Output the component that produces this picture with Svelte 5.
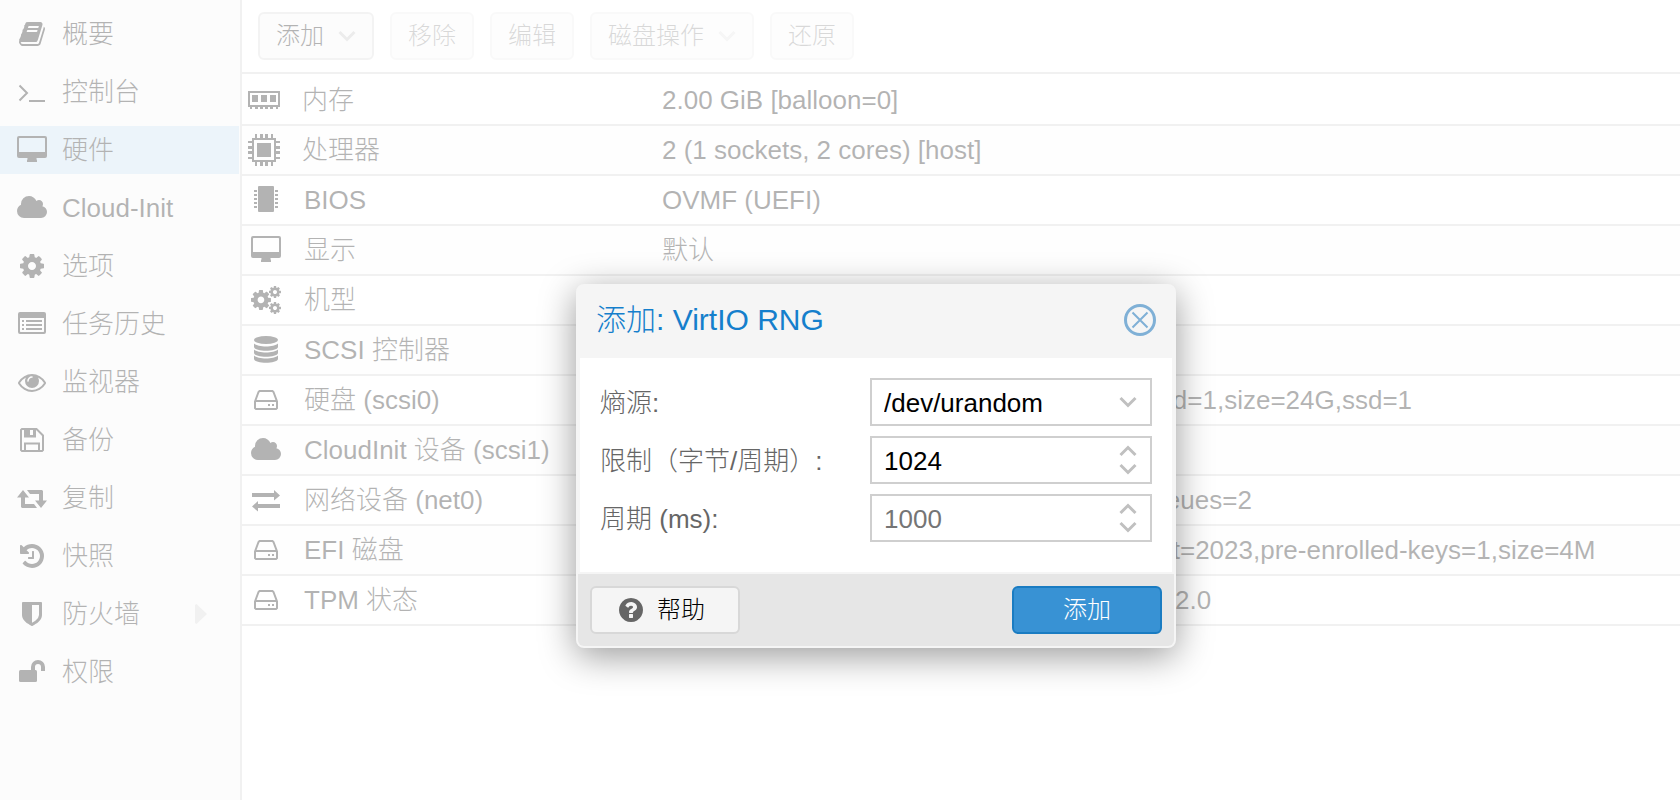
<script>
  const cog =
    "M1152 896q0-106-75-181t-181-75-181 75-75 181 75 181 181 75 181-75 75-181zm512-109v222q0 12-8 23t-20 13l-185 28q-19 54-39 91 35 50 107 138 10 12 10 25t-9 23q-27 37-99 108t-94 71q-12 0-26-9l-138-108q-44 23-91 38-16 136-29 186-7 28-36 28h-222q-14 0-24.5-8.5t-11.5-21.5l-28-184q-49-16-90-37l-141 107q-10 9-25 9-14 0-25-11-126-114-165-168-7-10-7-23 0-12 8-23 15-21 51-66.5t54-70.5q-27-50-41-99l-183-27q-13-2-21-12.5t-8-23.5v-222q0-12 8-23t19-13l186-28q14-46 39-92-40-57-107-138-10-12-10-24 0-10 9-23 26-36 98.5-107.5t94.5-71.5q13 0 26 10l138 107q44-23 91-38 16-136 29-186 7-28 36-28h222q14 0 24.5 8.5t11.5 21.5l28 184q49 16 90 37l142-107q9-9 24-9 13 0 25 10 129 119 165 170 7 8 7 22 0 12-8 23-15 21-51 66.5t-54 70.5q26 50 41 98l183 28q13 2 21 12.5t8 23.5z";

  const navItems = [
    { icon: "book", text: "概要" },
    { icon: "terminal", text: "控制台" },
    { icon: "desktop", text: "硬件", selected: true },
    { icon: "cloud", text: "Cloud-Init" },
    { icon: "cog", text: "选项" },
    { icon: "list", text: "任务历史" },
    { icon: "eye", text: "监视器" },
    { icon: "floppy", text: "备份" },
    { icon: "retweet", text: "复制" },
    { icon: "history", text: "快照" },
    { icon: "shield", text: "防火墙", expandable: true },
    { icon: "unlock", text: "权限" },
  ];

  const tools = [
    { text: "添加", menu: true },
    { text: "移除", disabled: true },
    { text: "编辑", disabled: true },
    { text: "磁盘操作", menu: true, disabled: true },
    { text: "还原", disabled: true },
  ];

  const hardware = [
    { icon: "memory", name: "内存", value: "2.00 GiB [balloon=0]" },
    { icon: "cpu", name: "处理器", value: "2 (1 sockets, 2 cores) [host]" },
    { icon: "chip", name: "BIOS", value: "OVMF (UEFI)" },
    { icon: "desktop", name: "显示", value: "默认" },
    { icon: "cogs", name: "机型", value: "" },
    { icon: "database", name: "SCSI 控制器", value: "" },
    {
      icon: "hdd",
      name: "硬盘 (scsi0)",
      value: "local-lvm:vm-1000-disk-1,discard=on,iothread=1,size=24G,ssd=1",
    },
    { icon: "cloud", name: "CloudInit 设备 (scsi1)", value: "" },
    {
      icon: "exchange",
      name: "网络设备 (net0)",
      value: "virtio=BC:24:11:CA:DE:AF,bridge=vmbr0,queues=2",
    },
    {
      icon: "hdd",
      name: "EFI 磁盘",
      value: "local-lvm:vm-1000-disk-0,efitype=4m,ms-cert=2023,pre-enrolled-keys=1,size=4M",
    },
    { icon: "hdd", name: "TPM 状态", value: "local-lvm:vm-1000-disk-2,size=4M,version=v2.0" },
  ];

  const wide = ["desktop", "cloud", "retweet", "cogs"];
  const large = ["memory", "cpu"];

  let source = $state("/dev/urandom");
  let limit = $state(1024);
  let period = $state(null);
  let open = $state(true);

  function iconWidth(name) {
    if (large.includes(name)) {
      return 32;
    }
    return wide.includes(name) ? 30 : 28;
  }

  function iconHeight(name) {
    return name === "cpu" ? 32 : 28;
  }

  function stepLimit(delta) {
    limit = Math.max(0, (limit ?? 0) + delta);
  }

  function stepPeriod(delta) {
    period = Math.max(0, (period ?? 1000) + delta);
  }
</script>

{#snippet icon(name)}
  <svg
    class="icon"
    width={iconWidth(name)}
    height={iconHeight(name)}
    viewBox="0 0 {iconWidth(name)} {iconHeight(name)}"
    aria-hidden="true"
  >
    {#if name === "book"}
      <path
        transform="scale(.015625)"
        d="M1703 478q40 57 18 129l-275 906q-19 64-76.5 107.5t-122.5 43.5h-923q-77 0-148.5-53.5t-99.5-131.5q-24-67-2-127 0-4 3-27t4-37q1-8-3-21.5t-3-19.5q2-11 8-21t16.5-23.5 16.5-23.5q23-38 45-91.5t30-91.5q3-10 .5-30t-.5-28q3-11 17-28t17-23q21-36 42-92t25-90q1-9-2.5-32t.5-28q4-13 22-30.5t22-22.5q19-26 42.5-84.5t27.5-96.5q1-8-3-25.5t-2-26.5q2-8 9-18t18-23 17-21q8-12 16.5-30.5t15-35 16-36 19.5-32 26.5-23.5 36-11.5 47.5 5.5l-1 3q38-9 51-9h761q74 0 114 56t18 130l-274 906q-36 119-71.5 153.5t-128.5 34.5h-869q-27 0-38 15-11 16-1 43 24 70 144 70h923q29 0 56-15.5t35-41.5l300-987q7-22 5-57 38 15 59 43zm-1064 2q-4 13 2 22.5t20 9.5h608q13 0 25.5-9.5t16.5-22.5l21-64q4-13-2-22.5t-20-9.5h-608q-13 0-25.5 9.5t-16.5 22.5zm-83 256q-4 13 2 22.5t20 9.5h608q13 0 25.5-9.5t16.5-22.5l21-64q4-13-2-22.5t-20-9.5h-608q-13 0-25.5 9.5t-16.5 22.5z"
      />
    {:else if name === "terminal"}
      <path class="line" d="M1.5 7.5L9 15l-7.500 7.500" />
      <path d="M11 22h16v2H11z" />
    {:else if name === "desktop"}
      <path
        fill-rule="evenodd"
        d="M2 0h26a2 2 0 0 1 2 2v18a2 2 0 0 1-2 2h-8.500q0 1.500 .5 2.500v1.500H10v-1.500q.5-1 .5-2.500H2a2 2 0 0 1-2-2V2a2 2 0 0 1 2-2zM2 2.500v13.500h26V2.500l-.5-.5h-25z"
      />
    {:else if name === "cloud"}
      <path
        transform="scale(.015625)"
        d="M1920 1152q0 159-112.500 271.500t-271.500 112.500h-1088q-185 0-316.500-131.500t-131.500-316.500q0-132 71-241.500t187-163.500q-2-28-2-43 0-212 150-362t362-150q158 0 286.500 88t187.500 230q70-62 166-62 106 0 181 75t75 181q0 75-41 138 129 30 213 134.500t84 239.500z"
      />
    {:else if name === "cog"}
      <path transform="scale(.015625)" d={cog} />
    {:else if name === "cogs"}
      <path transform="translate(-1.700 2.300) scale(.013)" d={cog} />
      <path transform="translate(17 -1) scale(.0078)" d={cog} />
      <path transform="translate(17 15) scale(.0078)" d={cog} />
    {:else if name === "list"}
      <path
        fill-rule="evenodd"
        d="M2 2h24a2 2 0 0 1 2 2v18a2 2 0 0 1-2 2H2a2 2 0 0 1-2-2V4a2 2 0 0 1 2-2zM2 8v13.500l.5.5h23l.5-.5V8z"
      />
      <path d="M4 10h2v2H4zM8 10h16v2H8zM4 14h2v2H4zM8 14h16v2H8zM4 18h2v2H4zM8 18h16v2H8z" />
    {:else if name === "eye"}
      <path
        transform="scale(.015625)"
        d="M1664 960q-152-236-381-353 61 104 61 225 0 185-131.500 316.500t-316.500 131.500-316.500-131.500-131.500-316.500q0-121 61-225-229 117-381 353 133 205 333.500 326.500t434.500 121.500 434.500-121.500 333.500-326.500zm-720-384q0-20-14-34t-34-14q-125 0-214.500 89.500t-89.500 214.500q0 20 14 34t34 14 34-14 14-34q0-86 61-147t147-61q20 0 34-14t14-34zm848 384q0 34-20 69-140 230-376.500 368.500t-499.500 138.500-499.500-139-376.500-368q-20-35-20-69t20-69q140-229 376.500-368t499.500-139 499.500 139 376.500 368q20 35 20 69z"
      />
    {:else if name === "floppy"}
      <path class="line" d="M4 3h14.500L25 9.500V24l-1 1H4l-1-1V4zM7 25v-7.500h14V25M7 3v7.500h10V3" />
      <path fill-rule="evenodd" d="M7 3h10v8H7zM12 4v5h3V4z" />
    {:else if name === "retweet"}
      <path d="M6 6l6 7.500H8V20h9l3 4H5l-1-1v-9.500H0z" />
      <path d="M10 6h15l1 1v9.500h4L24 24l-6-7.500h4V10h-9z" />
    {:else if name === "history"}
      <path
        transform="scale(.015625)"
        d="M1664 896q0 156-61 298t-164 245-245 164-298 61q-172 0-327-72.500t-264-204.500q-7-10-6.500-22.500t8.500-20.500l137-138q10-9 25-9 16 2 23 12 73 95 179 147t225 52q104 0 198.500-40.500t163.500-109.500 109.500-163.500 40.500-198.500-40.500-198.500-109.500-163.500-163.500-109.500-198.500-40.500q-98 0-188 35.500t-160 101.500l137 138q31 30 14 69-17 40-59 40h-448q-26 0-45-19t-19-45v-448q0-42 40-59 39-17 69 14l130 129q107-101 244.500-156.500t284.500-55.500q156 0 298 61t245 164 164 245 61 298zm-640-288v448q0 14-9 23t-23 9h-320q-14 0-23-9t-9-23v-64q0-14 9-23t23-9h224v-352q0-14 9-23t23-9h64q14 0 23 9t9 23z"
      />
    {:else if name === "shield"}
      <path
        transform="scale(.015625)"
        d="M1344 960v-640h-448v1137q119-63 213-137 235-184 235-360zm192-768v768q0 86-33.500 170.500t-83 150-118 127.500-126.500 103-121 77.500-89.500 49.500-42.500 20q-12 6-26 6t-26-6q-16-7-42.500-20t-89.500-49.500-121-77.500-126.500-103-118-127.500-83-150-33.500-170.500v-768q0-26 19-45t45-19h1152q26 0 45 19t19 45z"
      />
    {:else if name === "unlock"}
      <rect x="1" y="12" width="18" height="12" rx="1.500" />
      <path class="bold" d="M15 12V9a5 5 0 0 1 10 0v4" />
    {:else if name === "memory"}
      <path class="line" d="M1 6h30v14H1z" />
      <path d="M4 9h6v7H4zM13 9h6v7h-6zM22 9h6v7h-6z" />
      <path d="M2 20h2v3H2zM7 20h3v3H7zM12 20h3v3h-3zM17 20h3v3h-3zM22 20h3v3h-3zM28 20h2v3h-2z" />
    {:else if name === "cpu"}
      <path class="line" d="M5 5h22v22H5z" />
      <path d="M9 9h14v14H9z" />
      <path
        d="M7 0h2v4H7zM12 0h3v4h-3zM17 0h3v4h-3zM23 0h2v4h-2zM7 28h2v4H7zM12 28h3v4h-3zM17 28h3v4h-3zM23 28h2v4h-2zM0 7h4v2H0zM0 12h4v3H0zM0 17h4v3H0zM0 23h4v2H0zM28 7h4v2h-4zM28 12h4v3h-4zM28 17h4v3h-4zM28 23h4v2h-4z"
      />
    {:else if name === "chip"}
      <rect x="6" y="0" width="16" height="26" rx="1" />
      <path
        d="M2 4h3v2H2zM2 8h3v2H2zM2 12h3v2H2zM2 16h3v2H2zM2 20h3v2H2zM23 4h3v2h-3zM23 8h3v2h-3zM23 12h3v2h-3zM23 16h3v2h-3zM23 20h3v2h-3z"
      />
    {:else if name === "database"}
      <ellipse cx="14" cy="4" rx="12" ry="4" />
      {#each [0, 6, 12] as y}
        <path transform="translate(0 {y})" d="M2 7.500c4 4 20 4 24 0v3.500c-1 5-23 5-24 0z" />
      {/each}
    {:else if name === "hdd"}
      <path class="line" d="M3 15.500L6.500 6l1-1h13l1 1L25 15.500V22l-1 1H4l-1-1zM3 15h22" />
      <path d="M16 18h2v2h-2zM20 18h2v2h-2z" />
    {:else if name === "exchange"}
      <path d="M0 7h22V4l6 5.500-6 5V11H0zM28 18H6v-3l-6 5.500 6 5V22h22z" />
    {:else if name === "help"}
      <path
        transform="scale(.015625)"
        d="M1024 1376v-192q0-14-9-23t-23-9h-192q-14 0-23 9t-9 23v192q0 14 9 23t23 9h192q14 0 23-9t9-23zm256-672q0-88-55.500-163t-138.500-116-170-41q-243 0-371 213-15 24 8 42l132 100q7 6 19 6 16 0 25-12 53-68 86-92 34-24 86-24 48 0 85.500 26t37.500 59q0 38-20 61t-68 45q-63 28-115.500 86.500t-52.500 125.500v36q0 14 9 23t23 9h192q14 0 23-9t9-23q0-19 21.500-49.500t54.500-49.500q32-18 49-28.500t46-35 44.500-48 28-60.500 12.500-81zm384 192q0 209-103 385.500t-279.500 279.500-385.500 103-385.500-103-279.500-279.500-103-385.500 103-385.500 279.500-279.500 385.500-103 385.500 103 279.500 279.500 103 385.500z"
      />
    {/if}
  </svg>
{/snippet}

{#snippet chevron(up)}
  <svg class="chevron" class:up width="18" height="12" viewBox="0 0 18 12" aria-hidden="true">
    <path d="M1.500 2L9 9.500 16.500 2" />
  </svg>
{/snippet}

<div class="viewport">
  <nav>
    {#each navItems as item}
      <a href="#{item.icon}" class:selected={item.selected}>
        <span class="nav-icon">{@render icon(item.icon)}</span>
        <span class="nav-text">{item.text}</span>
        {#if item.expandable}
          <svg class="expander" width="12" height="20" viewBox="0 0 12 20" aria-hidden="true">
            <path d="M0 1l1.500-1L12 10 1.500 20 0 19z" />
          </svg>
        {/if}
      </a>
    {/each}
  </nav>

  <main>
    <div class="toolbar">
      {#each tools as tool}
        <button type="button" class="tool" disabled={tool.disabled}>
          {tool.text}
          {#if tool.menu}{@render chevron(false)}{/if}
        </button>
      {/each}
    </div>
    <table>
      <tbody>
        {#each hardware as row}
          <tr>
            <th scope="row">
              <span class="name" class:large={large.includes(row.icon)}>
                <span class="row-icon">{@render icon(row.icon)}</span>
                {row.name}
              </span>
            </th>
            <td>{row.value}</td>
          </tr>
        {/each}
      </tbody>
    </table>
  </main>

  {#if open}
    <div class="mask"></div>
    <div class="window" role="dialog" aria-modal="true" aria-labelledby="window-title">
      <header>
        <h1 id="window-title">添加: VirtIO RNG</h1>
        <button type="button" class="close" aria-label="关闭" onclick={() => (open = false)}>
          <svg width="32" height="32" viewBox="0 0 32 32" aria-hidden="true">
            <circle cx="16" cy="16" r="14.500" />
            <path d="M8.500 8.500l15 15M23.500 8.500l-15 15" />
          </svg>
        </button>
      </header>
      <form id="rng-form" onsubmit={(e) => e.preventDefault()}>
        <label for="source">熵源:</label>
        <div class="field">
          <select id="source" bind:value={source}>
            <option>/dev/urandom</option>
            <option>/dev/random</option>
            <option>/dev/hwrng</option>
          </select>
          <span class="trigger">{@render chevron(false)}</span>
        </div>
        <label for="limit">限制（字节/周期）:</label>
        <div class="field">
          <input id="limit" type="number" bind:value={limit} />
          <span class="spinner">
            <button type="button" aria-label="+" onclick={() => stepLimit(1)}>
              {@render chevron(true)}
            </button>
            <button type="button" aria-label="-" onclick={() => stepLimit(-1)}>
              {@render chevron(false)}
            </button>
          </span>
        </div>
        <label for="period">周期 (ms):</label>
        <div class="field">
          <input id="period" type="number" placeholder="1000" bind:value={period} />
          <span class="spinner">
            <button type="button" aria-label="+" onclick={() => stepPeriod(1)}>
              {@render chevron(true)}
            </button>
            <button type="button" aria-label="-" onclick={() => stepPeriod(-1)}>
              {@render chevron(false)}
            </button>
          </span>
        </div>
      </form>
      <footer>
        <button type="button" class="help">{@render icon("help")}帮助</button>
        <button type="submit" class="submit" form="rng-form">添加</button>
      </footer>
    </div>
  {/if}
</div>

<style>
  :global(body) {
    background: #fff;
  }
  .viewport,
  .viewport button,
  .viewport input,
  .viewport select {
    font-family: "Liberation Sans", "Noto Sans CJK SC", sans-serif;
    font-weight: 300;
  }
  .viewport {
    position: relative;
    display: flex;
    min-height: 100vh;
    overflow: hidden;
    font-size: 26px;
    line-height: 32px;
    color: #000;
  }
  button {
    margin: 0;
    padding: 0;
    line-height: 32px;
    cursor: pointer;
  }
  .icon {
    display: block;
    flex: none;
    fill: currentColor;
  }
  .icon .line,
  .icon .bold {
    fill: none;
    stroke: currentColor;
    stroke-width: 2;
  }
  .icon .bold {
    stroke-width: 4;
  }
  .chevron {
    display: block;
    fill: none;
    stroke: #c0c0c0;
    stroke-width: 3;
  }
  .chevron.up {
    transform: rotate(180deg);
  }

  nav {
    box-sizing: border-box;
    flex: none;
    display: flex;
    flex-direction: column;
    gap: 10px;
    width: 242px;
    padding: 10px 1px 10px 0;
    background: #f5f5f5;
    border-right: 2px solid #cfcfcf;
  }
  nav a {
    display: flex;
    align-items: center;
    height: 48px;
    padding: 0 32px 0 15px;
    color: inherit;
    text-decoration: none;
  }
  nav a.selected {
    background: #bfdaee;
  }
  .nav-icon {
    display: flex;
    justify-content: center;
    width: 34px;
    margin-right: 13px;
  }
  .nav-text {
    flex: 1;
  }
  .expander {
    fill: #cfcfcf;
  }

  main {
    flex: 1;
    min-width: 0;
  }
  .toolbar {
    display: flex;
    gap: 16px;
    padding: 12px 16px;
    border-bottom: 2px solid #cfcfcf;
  }
  .tool {
    display: flex;
    align-items: center;
    gap: 14px;
    height: 48px;
    padding: 0 16px;
    border: 2px solid #d8d8d8;
    border-radius: 6px;
    background: #f5f5f5;
    font-size: 24px;
    color: #000;
  }
  .tool:disabled {
    opacity: 0.5;
  }
  table {
    width: 100%;
    border-spacing: 0;
    table-layout: fixed;
  }
  tr:nth-child(even) {
    background: #fafafa;
  }
  th,
  td {
    box-sizing: border-box;
    height: 50px;
    padding: 0;
    border-bottom: 2px solid #cfcfcf;
    font-weight: 300;
    text-align: left;
    white-space: nowrap;
  }
  tr:first-child th,
  tr:first-child td {
    height: 52px;
    padding-top: 2px;
  }
  th {
    width: 420px;
  }
  .name {
    display: flex;
    align-items: center;
    gap: 20px;
    padding-left: 6px;
  }
  .name.large {
    padding-left: 4px;
  }
  .row-icon {
    display: flex;
    justify-content: center;
    width: 36px;
  }

  .mask {
    position: absolute;
    inset: 0;
    background: rgba(255, 255, 255, 0.7);
  }
  .window {
    position: absolute;
    top: 284px;
    left: 576px;
    box-sizing: border-box;
    width: 600px;
    border: 2px solid #f5f5f5;
    border-radius: 8px;
    background: #f5f5f5;
    box-shadow: 0 8px 36px rgba(0, 0, 0, 0.4);
  }
  header {
    display: flex;
    align-items: center;
    justify-content: space-between;
    height: 68px;
    padding: 0 18px 4px;
  }
  h1 {
    margin: 0;
    font-size: 30px;
    font-weight: 300;
    line-height: 36px;
    color: #157fcc;
  }
  .close {
    width: 32px;
    height: 32px;
    border: 0;
    background: none;
  }
  .close svg {
    display: block;
    fill: none;
    stroke: #7fb0d6;
    stroke-width: 3;
  }
  .close path {
    stroke-width: 2;
  }
  form {
    display: grid;
    grid-template-columns: 270px 1fr;
    gap: 10px 0;
    align-items: center;
    margin: 0 2px 2px;
    padding: 20px 20px 30px;
    background: #fff;
  }
  label {
    padding-top: 2px;
    color: #666;
  }
  .field {
    display: grid;
    grid-template-columns: 1fr 44px;
    box-sizing: border-box;
    height: 48px;
    border: 2px solid #cfcfcf;
    background: #fff;
  }
  .field input,
  .field select {
    grid-area: 1 / 1;
    box-sizing: border-box;
    width: 100%;
    min-width: 0;
    margin: 0;
    padding: 2px 12px 0;
    border: 0;
    outline: 0;
    background: none;
    font-size: 26px;
    color: #000;
    appearance: none;
    -moz-appearance: textfield;
  }
  .field input::placeholder {
    color: #757575;
  }
  .field input::-webkit-inner-spin-button {
    appearance: none;
    margin: 0;
  }
  .field select {
    grid-column: 1 / 3;
  }
  .trigger {
    grid-area: 1 / 2;
    display: grid;
    place-items: center;
    pointer-events: none;
  }
  .spinner {
    display: grid;
    grid-template-rows: 18px 18px;
    align-content: center;
    justify-items: center;
  }
  .spinner button {
    display: grid;
    place-items: center;
    width: 44px;
    border: 0;
    background: none;
  }
  footer {
    display: flex;
    justify-content: space-between;
    padding: 12px;
    border-radius: 0 0 6px 6px;
    background: #e6e6e6;
  }
  footer button {
    display: flex;
    align-items: center;
    justify-content: center;
    box-sizing: border-box;
    width: 150px;
    height: 48px;
    border: 2px solid #d8d8d8;
    border-radius: 6px;
    background: #f5f5f5;
    font-size: 24px;
    color: #000;
  }
  footer .help {
    justify-content: flex-start;
    gap: 12px;
    padding-left: 25px;
  }
  .help .icon {
    color: #666;
  }
  footer .submit {
    border-color: #1a7cc2;
    background: #3892d4;
    color: #fff;
  }
</style>
